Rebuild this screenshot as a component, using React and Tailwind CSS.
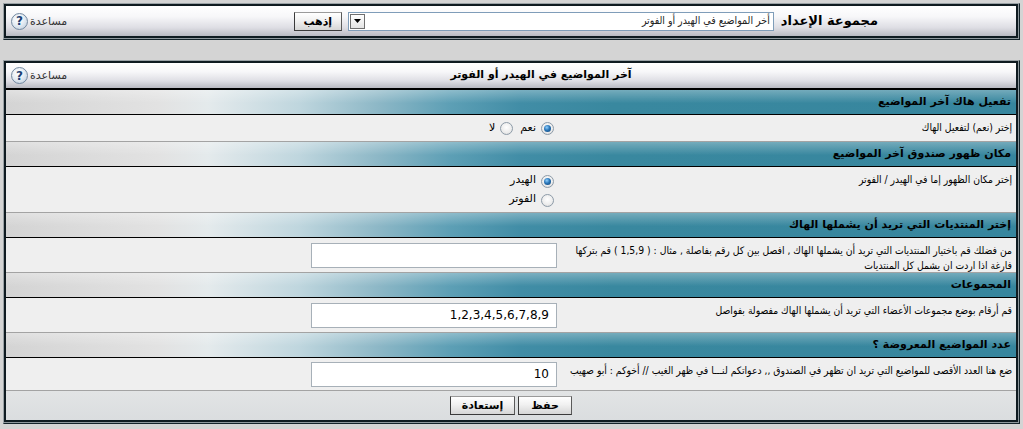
import React from "react";

const headerBg =
  "bg-[linear-gradient(to_bottom,rgba(255,255,255,0.3),rgba(255,255,255,0)_55%),linear-gradient(to_right,#d4d4d4_0%,#e2e2e2_15%,#e4eaec_20%,#bfd6de_29%,#8cb7c6_37%,#5d9fb5_44%,#418da6_51%,#39889f_60%,#37869e_100%)]";
const barBg =
  "bg-[linear-gradient(to_bottom,#ffffff_0%,#f7f7f9_35%,#dedee4_72%,#b9bac2_100%)]";
const descFont = "font-['DejaVu_Sans_Condensed','DejaVu_Sans',sans-serif]";

function Frame({ children }) {
  return (
    <div className="border-l border-t border-l-[#9aa2a6] border-t-[#9aa2a6] border-r border-b border-r-[#14232a] border-b-[#14232a] bg-[#8e989d] pr-px pb-px">
      <div className="border-2 border-[#0f1b21]">{children}</div>
    </div>
  );
}

function Help() {
  return (
    <div className="w-[60px] h-full flex items-center justify-end pl-[5px] gap-[2px]">
      <span className="text-[11px] text-[#333] leading-none">مساعدة</span>
      <span className="w-[17px] h-[17px] rounded-full border border-[#7288a0] bg-[radial-gradient(circle_at_40%_35%,#ffffff_0%,#e6edf4_45%,#b8c8d8_100%)] flex items-center justify-center text-[12px] font-bold text-[#1c3f73] leading-none shrink-0">
        ?
      </span>
    </div>
  );
}

function Button({ children, w }) {
  return (
    <button
      className={`${w} h-[19px] border border-[#3a3a3a] border-t-[#9a9a9a] border-r-[#5a5a5a] bg-[linear-gradient(to_bottom,#ffffff_0%,#f1f1f1_45%,#d6d6d6_100%)] text-[11px] font-bold text-black leading-none flex items-center justify-center font-['DejaVu_Sans',sans-serif]`}
    >
      {children}
    </button>
  );
}

function Radio({ checked }) {
  return (
    <span className="mt-[1px] mr-[3px] ml-[5px] w-[13px] h-[13px] rounded-full border border-[#8d9ba8] bg-[radial-gradient(circle_at_50%_40%,#ffffff_0%,#ececec_60%,#d2d2d2_100%)] flex items-center justify-center shrink-0">
      {checked && (
        <span className="w-[7px] h-[7px] rounded-full bg-[radial-gradient(circle_at_40%_35%,#8fd0ff_0%,#2a76b8_45%,#0b3e70_100%)]" />
      )}
    </span>
  );
}

function Header({ children }) {
  return (
    <div
      className={`h-[25px] border-b border-black ${headerBg} flex items-center pr-[5px] text-[11px] font-bold text-black`}
    >
      {children}
    </div>
  );
}

function Row({ h, desc, children, center, pt = "pt-[4px]" }) {
  return (
    <div className={`${h} border-b border-[#a3a3a3] bg-[#efefef] flex`}>
      <div
        className={`w-[454px] pr-[4px] pt-[5px] text-[10.3px] leading-[15px] text-black whitespace-nowrap ${descFont}`}
      >
        {desc}
      </div>
      <div className={`flex-1 pr-[5px] flex ${center ? "items-center" : pt}`}>
        {children}
      </div>
    </div>
  );
}

function TextInput({ value }) {
  return (
    <div className="w-[246px] h-[25px] border border-[#a7b0b8] bg-white flex items-center justify-start pr-[7px] text-[12px] text-black font-['DejaVu_Sans',sans-serif]">
      <span dir="ltr">{value}</span>
    </div>
  );
}

export default function App() {
  return (
    <div
      dir="rtl"
      className="w-[1023px] h-[429px] bg-[#d4d4d4] pt-[3px] px-[3px] font-['DejaVu_Sans',sans-serif] text-black overflow-hidden"
    >
      <Frame>
        <div className={`h-[30px] flex items-center ${barBg}`}>
          <div className="flex-1 flex items-center justify-start pr-[138px]">
            <span className="text-[13px] font-bold ml-[7px]">مجموعة الإعداد</span>
            <div className="w-[426px] h-[19px] border border-[#7f9db9] bg-white flex items-center justify-between pr-[3px] pl-[1px]">
              <span className={`text-[10.5px] text-[#222] ${descFont}`}>
                أخر المواضيع في الهيدر أو الفوتر
              </span>
              <span className="w-[15px] h-[15px] border border-[#6f6f6f] bg-[linear-gradient(to_bottom,#ffffff,#e4e4e4)] flex items-center justify-center">
                <svg width="7" height="4" viewBox="0 0 7 4">
                  <path d="M0 0H7L3.5 4Z" fill="#000" />
                </svg>
              </span>
            </div>
            <div className="w-[6px]" />
            <Button w="w-[48px]">إذهب</Button>
          </div>
          <Help />
        </div>
      </Frame>

      <div className="h-[20px]" />

      <Frame>
        <div className={`h-[27px] border-b-2 border-black flex items-center ${barBg}`}>
          <div className="flex-1 text-center text-[11px] font-bold">
            آخر المواضيع في الهيدر أو الفوتر
          </div>
          <Help />
        </div>

        <Header>تفعيل هاك آخر المواضيع</Header>
        <Row h="h-[27px]" desc="إختر (نعم) لتفعيل الهاك" center>
          <div className="flex items-center text-[11px]">
            <Radio checked />
            <span>نعم</span>
            <span className="w-[4px]" />
            <Radio />
            <span>لا</span>
          </div>
        </Row>

        <Header>مكان ظهور صندوق آخر المواضيع</Header>
        <Row h="h-[46px]" pt="pt-[7px]" desc="إختر مكان الظهور إما في الهيدر / الفوتر">
          <div className="flex flex-col gap-[6px] text-[11px]">
            <div className="flex items-center h-[13px]">
              <Radio checked />
              <span>الهيدر</span>
            </div>
            <div className="flex items-center h-[13px]">
              <Radio />
              <span>الفوتر</span>
            </div>
          </div>
        </Row>

        <Header>إختر المنتديات التي تريد أن يشملها الهاك</Header>
        <Row
          h="h-[35px]"
          center
          desc={
            <>
              من فضلك قم باختيار المنتديات التي تريد أن يشملها الهاك , افصل بين كل رقم بفاصلة , مثال : ( 1,5,9 ) قم بتركها
              <br />
              فارغة اذا اردت ان يشمل كل المنتديات
            </>
          }
        >
          <TextInput value="" />
        </Row>

        <Header>المجموعات</Header>
        <Row
          h="h-[35px]"
          center
          desc="قم أرقام بوضع مجموعات الأعضاء التي تريد أن يشملها الهاك مفصولة بفواصل"
        >
          <TextInput value="1,2,3,4,5,6,7,8,9" />
        </Row>

        <Header>عدد المواضيع المعروضة ؟</Header>
        <Row
          h="h-[33px]"
          center
          desc="ضع هنا العدد الأقصى للمواضيع التي تريد ان تظهر في الصندوق ,, دعواتكم لنـــا في ظهر الغيب // أخوكم : أبو صهيب"
        >
          <TextInput value="10" />
        </Row>

        <div className="h-[29px] bg-[linear-gradient(to_bottom,#e2e4e5,#dadddf)] flex items-center justify-center gap-[3px]">
          <Button w="w-[54px]">حفظ</Button>
          <Button w="w-[65px]">إستعادة</Button>
        </div>
      </Frame>
    </div>
  );
}
